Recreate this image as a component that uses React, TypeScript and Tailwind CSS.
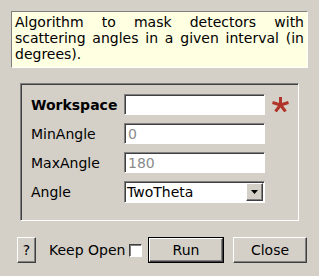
import React from "react"

const sunken = "border border-t-[#808080] border-l-[#808080] border-b-white border-r-white shadow-[inset_1px_1px_0_#404040]"
const raised = "border border-t-white border-l-white border-b-[#404040] border-r-[#404040] shadow-[inset_-1px_-1px_0_#808080]"

function Field({ label, value, bold, muted }: { label: string; value: string; bold?: boolean; muted?: boolean }) {
  return (
    <div className="flex items-center h-[21px]">
      <div className={`w-[93px] ${bold ? "font-bold" : ""}`}>{label}</div>
      <div className={`w-[141px] h-[21px] bg-white ${sunken} flex items-center pl-[3px] ${muted ? "text-[#8a8a8a]" : ""}`}>
        {value}
      </div>
    </div>
  )
}

export default function App() {
  return (
    <div
      className="w-[319px] h-[276px] bg-[#d4d0c8] text-black text-[14px] leading-[16px] overflow-hidden"
      style={{ fontFamily: '"DejaVu Sans", sans-serif' }}
    >
      <div className="pt-[11px] pl-[11px]">
        {/* description */}
        <div className="w-[297px] h-[57px] bg-[#ffffe1] border border-t-[#808080] border-l-[#808080] border-b-white border-r-white px-[3px] pt-[2px] text-justify">
          Algorithm to mask detectors with scattering angles in a given interval (in degrees).
        </div>
      </div>

      {/* property group */}
      <div className="ml-[20px] mt-[15px] w-[279px] h-[138px] border border-t-[#808080] border-l-[#808080] border-b-white border-r-white shadow-[inset_1px_1px_0_#404040] pl-[10px] pt-[10px]">
        <div className="flex flex-col gap-[8px]">
          <div className="flex items-center">
            <Field label="Workspace" value="" bold />
            <svg className="ml-[7px]" width="17" height="15" viewBox="0 0 17 15">
              <g stroke="#b0342a" strokeWidth="3" strokeLinecap="butt">
                <line x1="8.5" y1="8" x2="8.5" y2="0" />
                <line x1="8.5" y1="8" x2="16.5" y2="5.5" />
                <line x1="8.5" y1="8" x2="0.5" y2="5.5" />
                <line x1="8.5" y1="8" x2="13.5" y2="14.5" />
                <line x1="8.5" y1="8" x2="3.5" y2="14.5" />
              </g>
            </svg>
          </div>
          <Field label="MinAngle" value="0" muted />
          <Field label="MaxAngle" value="180" muted />
          <div className="flex items-center h-[22px]">
            <div className="w-[93px]">Angle</div>
            <div className={`w-[141px] h-[22px] bg-white ${sunken} flex items-center pl-[2px] pr-[1px]`}>
              <span className="flex-1">TwoTheta</span>
              <div className={`w-[17px] h-[18px] bg-[#d4d0c8] ${raised} flex items-center justify-center`}>
                <svg width="7" height="4" viewBox="0 0 7 4">
                  <path d="M0 0h7L3.5 4z" fill="#000" />
                </svg>
              </div>
            </div>
          </div>
        </div>
      </div>

      {/* buttons */}
      <div className="flex items-center mt-[16px] pl-[17px] h-[26px]">
        <div className={`w-[19px] h-[26px] shrink-0 ${raised} flex items-center justify-center`}>?</div>
        <div className="ml-[13px] w-[93px] shrink-0 flex items-center whitespace-nowrap">
          <span className="w-[80px] shrink-0">Keep Open</span>
          <span className="shrink-0 w-[13px] h-[13px] bg-white border border-t-[#404040] border-l-[#404040] border-b-white border-r-white shadow-[inset_1px_1px_0_#808080]" />
        </div>
        <div className="ml-[6px] w-[76px] h-[26px] shrink-0 border border-black">
          <div className={`w-full h-full ${raised} flex items-center justify-center`}>Run</div>
        </div>
        <div className={`ml-[9px] w-[74px] h-[26px] shrink-0 ${raised} flex items-center justify-center`}>Close</div>
      </div>
    </div>
  )
}
